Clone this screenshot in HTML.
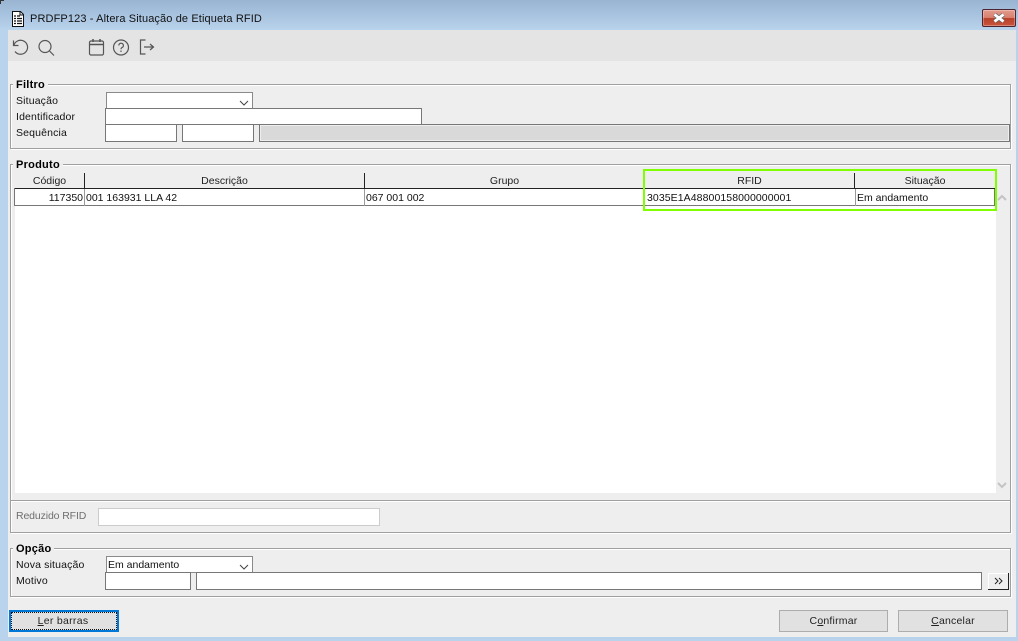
<!DOCTYPE html>
<html><head><meta charset="utf-8"><style>
html,body{margin:0;padding:0}
body{width:1018px;height:641px;overflow:hidden;position:relative;background:#b9d3ec;font-family:"Liberation Sans",sans-serif;font-size:10.5px;color:#111}
div,span.a{position:absolute;box-sizing:border-box}
.t{white-space:nowrap;line-height:14px;height:14px}
.l{letter-spacing:.15px}
.fs{border:1px solid #a0a0a0;box-shadow:inset 1px 1px 0 #fff,1px 1px 0 #fff}
.lg{font-weight:bold;background:#eee;padding:0 3px;font-size:11px;color:#000;letter-spacing:.25px}
.in{background:#fff;border:1px solid #777}
.sel{background:#fff;border:1px solid #8a8a8a}
.h{background:#eee;height:16px;top:173px;text-align:center;line-height:16px;border-right:1px solid #222;border-bottom:1px solid #222;color:#222}
.c{top:190px;height:16px;line-height:16px;white-space:nowrap;padding:0 1px;color:#111}
.btn{background:#e1e1e1;border:1px solid #adadad;text-align:center;line-height:20px;color:#222;letter-spacing:.2px}
</style></head><body>
<div style="left:0;top:0;width:1018px;height:30px;background:linear-gradient(#98b4d2,#b9d3ec)"></div>
<div style="left:0;top:0;width:4px;height:1px;background:#333"></div>
<div style="left:0;top:0;width:1px;height:4px;background:#333"></div>
<svg style="position:absolute;left:11px;top:11px" width="14" height="16" viewBox="0 0 14 16"><path d="M1.5 .5H9.5L12.5 3.5V15.5H1.5Z" fill="#fff" stroke="#111"/><path d="M9 1V4H12" fill="none" stroke="#111"/><path d="M3 5h2M6 5h3M3 7.500h2M6 7.500h5M3 10h2M6 10h5M3 12.500h2M6 12.500h5" stroke="#111" stroke-width="1.300"/></svg>
<div class="t" style="left:30px;top:12px;font-size:11px;letter-spacing:.12px;color:#111">PRDFP123 - Altera Situação de Etiqueta RFID</div>
<div style="left:982px;top:9px;width:34px;height:18px;border:1px solid #4a2430;border-radius:2px;background:linear-gradient(#e39a8b 0,#d8806f 48%,#b8402a 52%,#c9543c 100%);box-shadow:inset 0 0 0 1px rgba(255,255,255,.3)"></div>
<svg style="position:absolute;left:992px;top:13px" width="14" height="10" viewBox="0 0 14 10"><path d="M2.500 1.500L11.500 8.500M11.500 1.500L2.500 8.500" stroke="#5d6470" stroke-width="4.200"/><path d="M2.500 1.500L11.500 8.500M11.500 1.500L2.500 8.500" stroke="#fff" stroke-width="2.800"/></svg>

<div style="left:8px;top:30px;width:1008px;height:607px;background:#eee"></div>
<div style="left:8px;top:30px;width:1008px;height:31px;background:#e4e4e4"></div>
<svg style="position:absolute;left:8px;top:34px" width="160" height="26" viewBox="0 0 160 26" fill="none" stroke="#555" stroke-width="1.200">
<path d="M5.500 6.500V11.500H10.500M5.800 11.500A7 7 0 1 1 7 17.500"/>
<circle cx="37" cy="12.500" r="6"/><path d="M41.500 17L46 21.500"/>
<rect x="81.500" y="7" width="14" height="14" rx="1.500"/><path d="M81.500 10.500H95.500M85 5V8M92 5V8" stroke-width="1.500"/>
<circle cx="113" cy="13.500" r="7.500"/><path d="M110.800 11.500A2.300 2.300 0 1 1 113.800 13.700C113.200 14 113 14.400 113 15.300" /><path d="M113 16.500V18"/>
<path d="M137.500 6H132.500V20H137.500M136 13H145M142 10L145.500 13L142 16"/>
</svg>

<div class="fs" style="left:10px;top:84px;width:1001px;height:65px"></div>
<div class="t lg" style="left:13px;top:78px">Filtro</div>
<div class="t l" style="left:16px;top:94px">Situação</div>
<div class="t l" style="left:16px;top:110px">Identificador</div>
<div class="t l" style="left:16px;top:126px">Sequência</div>
<div class="sel" style="left:106px;top:92px;width:147px;height:17px"></div>
<svg style="position:absolute;left:239px;top:100px" width="10" height="6"><path d="M1 1L5 5L9 1" fill="none" stroke="#444"/></svg>
<div class="in" style="left:105px;top:108px;width:317px;height:17px"></div>
<div class="in" style="left:105px;top:124px;width:72px;height:18px"></div>
<div class="in" style="left:182px;top:124px;width:72px;height:18px"></div>
<div style="left:259px;top:124px;width:751px;height:18px;background:#d9d9d9;border:1px solid #777;box-shadow:inset 0 0 0 1px #eee"></div>

<div class="fs" style="left:10px;top:164px;width:1001px;height:337px"></div>
<div class="fs" style="left:10px;top:500px;width:1001px;height:33px"></div>
<div class="t lg" style="left:13px;top:158px">Produto</div>
<div style="left:15px;top:173px;width:981px;height:320px;background:#fff"></div>
<div style="left:996px;top:173px;width:14px;height:320px;background:#eee"></div>
<div style="left:14px;top:188px;width:981px;height:18px;border:1px solid #777;background:#fff"></div>
<div class="h" style="left:15px;width:70px">Código</div>
<div class="h" style="left:85px;width:280px">Descrição</div>
<div class="h" style="left:365px;width:280px">Grupo</div>
<div class="h" style="left:645px;width:210px">RFID</div>
<div class="h" style="left:855px;width:141px">Situação</div>
<div style="left:84px;top:189px;width:1px;height:17px;background:#999"></div>
<div style="left:364px;top:189px;width:1px;height:17px;background:#999"></div>
<div style="left:644px;top:189px;width:1px;height:17px;background:#999"></div>
<div style="left:855px;top:189px;width:1px;height:17px;background:#999"></div>
<div class="c" style="left:15px;width:69px;text-align:right">117350</div>
<div class="c" style="left:85px">001 163931 LLA 42</div>
<div class="c" style="left:365px">067 001 002</div>
<div class="c" style="left:645px;padding:0 2px;letter-spacing:.08px">3035E1A48800158000000001</div>
<div class="c" style="left:855px;padding:0 2px">Em andamento</div>
<div style="left:643px;top:169px;width:354px;height:42px;border:2px solid #7fff00"></div>
<svg style="position:absolute;left:997px;top:194px" width="10" height="8"><path d="M1 6L5 2L9 6" fill="none" stroke="#c4c4c4" stroke-width="2"/></svg>
<svg style="position:absolute;left:997px;top:481px" width="10" height="8"><path d="M1 2L5 6L9 2" fill="none" stroke="#c4c4c4" stroke-width="2"/></svg>
<div class="t" style="left:16px;top:509px;color:#6f6f6f;letter-spacing:-.12px">Reduzido RFID</div>
<div style="left:98px;top:508px;width:282px;height:18px;background:#fff;border:1px solid #ccc"></div>

<div class="fs" style="left:10px;top:548px;width:1001px;height:49px"></div>
<div class="t lg" style="left:13px;top:542px">Opção</div>
<div class="t l" style="left:16px;top:558px">Nova situação</div>
<div class="t l" style="left:16px;top:574px">Motivo</div>
<div class="sel" style="left:106px;top:556px;width:147px;height:17px;padding:1px 0 0 1px;line-height:14px">Em andamento</div>
<svg style="position:absolute;left:239px;top:564px" width="10" height="6"><path d="M1 1L5 5L9 1" fill="none" stroke="#444"/></svg>
<div class="in" style="left:105px;top:572px;width:86px;height:18px"></div>
<div class="in" style="left:196px;top:572px;width:786px;height:18px"></div>
<div style="left:988px;top:573px;width:21px;height:17px;background:#eee;border-right:1px solid #222;border-bottom:1px solid #222;box-shadow:inset 1px 1px 0 #fff"></div>
<svg style="position:absolute;left:994px;top:577px" width="10" height="9"><path d="M1 1L4 4L1 7M5 1L8 4L5 7" fill="none" stroke="#222"/></svg>

<div style="left:9px;top:610px;width:110px;height:22px;background:#e1e1e1;border:2px solid #0078d7"></div>
<div style="left:11px;top:612px;width:106px;height:18px;border:1px dotted #111"></div>
<div class="t" style="left:8px;top:614px;width:110px;text-align:center;color:#222;letter-spacing:.3px"><u>L</u>er barras</div>
<div class="btn" style="left:779px;top:610px;width:109px;height:22px"><span>C<u>o</u>nfirmar</span></div>
<div class="btn" style="left:898px;top:610px;width:110px;height:22px"><span><u>C</u>ancelar</span></div>
</body></html>
